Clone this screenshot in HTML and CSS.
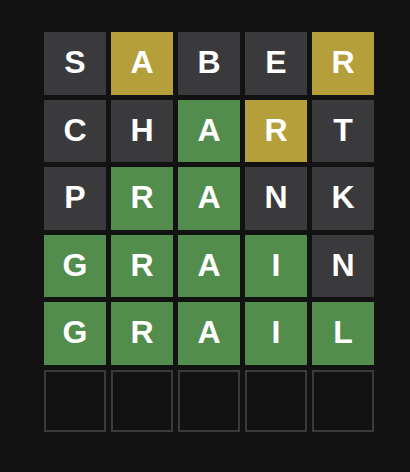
FILE: index.html
```html
<!DOCTYPE html>
<html>
<head>
<meta charset="utf-8">
<link rel="stylesheet" href="styles.css">
</head>
<body>
<div class="board">
  <div class="row">
    <div class="tile absent">S</div><div class="tile present">A</div><div class="tile absent">B</div><div class="tile absent">E</div><div class="tile present">R</div>
  </div>
  <div class="row">
    <div class="tile absent">C</div><div class="tile absent">H</div><div class="tile correct">A</div><div class="tile present">R</div><div class="tile absent">T</div>
  </div>
  <div class="row">
    <div class="tile absent">P</div><div class="tile correct">R</div><div class="tile correct">A</div><div class="tile absent">N</div><div class="tile absent">K</div>
  </div>
  <div class="row">
    <div class="tile correct">G</div><div class="tile correct">R</div><div class="tile correct">A</div><div class="tile correct">I</div><div class="tile absent">N</div>
  </div>
  <div class="row">
    <div class="tile correct">G</div><div class="tile correct">R</div><div class="tile correct">A</div><div class="tile correct">I</div><div class="tile correct">L</div>
  </div>
  <div class="row">
    <div class="tile empty"></div><div class="tile empty"></div><div class="tile empty"></div><div class="tile empty"></div><div class="tile empty"></div>
  </div>
</div>
</body>
</html>
```
FILE: styles.css
```css
html, body {
  margin: 0;
  padding: 0;
  background: #121213;
  height: 100%;
}
body {
  font-family: "Liberation Sans", Arial, sans-serif;
}
.board {
  box-sizing: border-box;
  width: 330px;
  height: 400px;
  margin: 32px 0 0 44px;
  display: grid;
  grid-template-rows: repeat(6, 1fr);
  gap: 5px;
}
.row {
  display: grid;
  grid-template-columns: repeat(5, 1fr);
  gap: 5px;
}
.tile {
  display: flex;
  align-items: center;
  justify-content: center;
  color: #ffffff;
  font-weight: bold;
  font-size: 32px;
  line-height: 1;
  padding-bottom: 2px;
  box-sizing: border-box;
}
.absent { background: #3a3a3c; }
.present { background: #b59f3b; }
.correct { background: #538d4e; }
.empty {
  border: 2px solid #3a3a3c;
  background: transparent;
}
```
